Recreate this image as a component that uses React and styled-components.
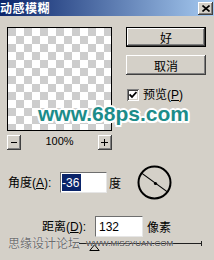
import React from "react";
import styled, { createGlobalStyle, css } from "styled-components";

const Global = createGlobalStyle`
  html, body { margin: 0; padding: 0; background: #d4d0c8; }
  body { font-family: "Liberation Sans", "Noto Sans CJK SC", sans-serif; }
`;

const bevel = css`
  box-shadow: inset -1px -1px #404040, inset 1px 1px #ffffff,
    inset -2px -2px #808080, inset 2px 2px #d4d0c8;
`;

const sunken = css`
  box-shadow: inset 1px 1px #808080, inset -1px -1px #ffffff,
    inset 2px 2px #404040, inset -2px -2px #d4d0c8;
`;

const Dialog = styled.div`
  position: relative;
  width: 214px;
  height: 260px;
  overflow: hidden;
  background: #d4d0c8;
  color: #000;
  font-size: 12px;
`;

const TitleBar = styled.div`
  display: flex;
  align-items: center;
  justify-content: space-between;
  height: 16px;
  background: linear-gradient(to right, #0a246a, #a6caf0);
`;

const Title = styled.span`
  color: #fff;
  font-family: "Noto Sans CJK SC", sans-serif;
  font-weight: 700;
  font-size: 12px;
  line-height: 16px;
  letter-spacing: 0.5px;
`;

const CloseBtn = styled.div`
  display: flex;
  align-items: center;
  justify-content: center;
  width: 15px;
  height: 13px;
  margin-right: 1px;
  background: #d4d0c8;
  ${bevel};
`;

const Body = styled.div`
  padding-top: 11px;
`;

const TopSection = styled.div`
  display: flex;
  align-items: flex-start;
  padding-left: 7px;
`;

const PreviewColumn = styled.div`
  width: 105px;
`;

const Preview = styled.div`
  box-sizing: border-box;
  width: 105px;
  height: 104px;
  border: 1px solid #000;
  background: repeating-conic-gradient(#ffffff 0 25%, #cdcdcd 0 50%) 0 0 / 16px 16px;
`;

const ZoomRow = styled.div`
  display: flex;
  align-items: center;
  justify-content: space-between;
  margin-top: 4px;
  height: 15px;
`;

const SmallBtn = styled.div`
  display: flex;
  align-items: center;
  justify-content: center;
  width: 14px;
  height: 15px;
  background: #d4d0c8;
  font-size: 11px;
  line-height: 1;
  ${bevel};
`;

const ZoomLabel = styled.span`
  font-size: 11px;
  line-height: 15px;
  margin-top: -3px;
`;

const ButtonColumn = styled.div`
  display: flex;
  flex-direction: column;
  width: 80px;
  margin-left: 14px;
`;

const Button = styled.div`
  box-sizing: border-box;
  display: flex;
  align-items: center;
  justify-content: center;
  width: 80px;
  height: 20px;
  margin-top: ${(p) => p.$gap || 0}px;
  background: #d4d0c8;
  font-family: "Noto Sans CJK SC", sans-serif;
  font-size: 12px;
  ${(p) =>
    p.$default
      ? css`
          border: 1px solid #000;
          ${bevel};
        `
      : bevel};
`;

const CheckRow = styled.div`
  display: flex;
  align-items: center;
  gap: 4px;
  margin-top: 13px;
  margin-left: 1px;
`;

const CheckBox = styled.div`
  display: flex;
  align-items: center;
  justify-content: center;
  width: 12px;
  height: 12px;
  background: #fff;
  ${sunken};
`;

const Label = styled.span`
  font-size: 12px;
  line-height: 14px;
  white-space: nowrap;
  width: ${(p) => (p.$w ? `${p.$w}px` : "auto")};
  flex: none;
`;

const FieldRow = styled.div`
  display: flex;
  align-items: center;
  margin-top: ${(p) => p.$top}px;
  padding-left: ${(p) => p.$left}px;
`;

const Field = styled.div`
  box-sizing: border-box;
  display: flex;
  align-items: stretch;
  width: ${(p) => p.$w}px;
  height: 21px;
  padding: 1px 1px 1px 1px;
  background: #fff;
  border-top: 1px solid #6e6e6e;
  border-left: 1px solid #6e6e6e;
  border-bottom: 1px solid #e6e6e6;
  border-right: 1px solid #e6e6e6;
  font-size: 12px;
  flex: none;
`;

const FieldText = styled.span`
  display: flex;
  align-items: center;
  padding: 0 ${(p) => (p.$selected ? 2 : 2)}px 0 ${(p) => (p.$selected ? 0 : 2)}px;
  background: ${(p) => (p.$selected ? "#0a246a" : "transparent")};
  color: ${(p) => (p.$selected ? "#fff" : "#000")};
`;

const Unit = styled.span`
  margin-left: ${(p) => p.$gap}px;
  font-size: 12px;
  white-space: nowrap;
`;

const Dial = styled.svg`
  display: block;
  margin-left: 16px;
  flex: none;
`;

const SliderRow = styled.div`
  position: relative;
  width: 123px;
  height: 10px;
  margin-top: 6px;
  margin-left: 79px;
`;

const Track = styled.div`
  width: 122px;
  height: 0;
  border-top: 1px solid #202020;
`;

const Tick = styled.div`
  position: absolute;
  right: 0;
  top: -2px;
  width: 1px;
  height: 5px;
  background: #202020;
`;

const Thumb = styled.svg`
  position: absolute;
  left: 10px;
  top: 1px;
`;

const SiteMark = styled.div`
  position: absolute;
  left: 38px;
  top: 103px;
  font-family: "Liberation Sans", "DejaVu Sans", sans-serif;
  font-weight: 700;
  font-size: 21px;
  line-height: 21px;
  color: #1c8c8a;
  white-space: nowrap;
  text-shadow: 2px 0 #fff, -2px 0 #fff, 0 2px #fff, 0 -2px #fff,
    1.5px 1.5px #fff, -1.5px 1.5px #fff, 1.5px -1.5px #fff, -1.5px -1.5px #fff,
    0 0 3px #fff;
`;

const ForumMark = styled.div`
  position: absolute;
  left: 8px;
  top: 236px;
  display: flex;
  align-items: center;
  gap: 6px;
  white-space: nowrap;
`;

const ForumName = styled.span`
  font-family: "Noto Sans CJK SC", sans-serif;
  font-size: 12px;
  line-height: 14px;
  color: #6e6e6e;
  text-shadow: 0 0 1px #fff;
`;

const ForumUrl = styled.span`
  font-family: "Liberation Sans", sans-serif;
  font-size: 8px;
  line-height: 8px;
  color: #3a3a3a;
  margin-top: 1px;
  text-shadow: 0 0 1px #fff;
`;

export default function App() {
  const angle = (36 * Math.PI) / 180;
  const c = 17.5;
  const r = 15.5;
  const dx = Math.cos(angle) * r;
  const dy = Math.sin(angle) * r;
  return (
    <>
      <Global />
      <Dialog>
        <TitleBar>
          <Title>动感模糊</Title>
          <CloseBtn>
            <svg width="8" height="7" viewBox="0 0 8 7">
              <path d="M0.5 0.5 L7.5 6.5 M7.5 0.5 L0.5 6.5" stroke="#000" strokeWidth="1.6" />
            </svg>
          </CloseBtn>
        </TitleBar>
        <Body>
          <TopSection>
            <PreviewColumn>
              <Preview />
              <ZoomRow>
                <SmallBtn>
                  <svg width="6" height="1" viewBox="0 0 6 1">
                    <rect width="6" height="1" fill="#000" />
                  </svg>
                </SmallBtn>
                <ZoomLabel>100%</ZoomLabel>
                <SmallBtn>
                  <svg width="7" height="7" viewBox="0 0 7 7">
                    <rect x="0" y="3" width="7" height="1" fill="#000" />
                    <rect x="3" y="0" width="1" height="7" fill="#000" />
                  </svg>
                </SmallBtn>
              </ZoomRow>
            </PreviewColumn>
            <ButtonColumn>
              <Button $default>好</Button>
              <Button $gap={8}>取消</Button>
              <CheckRow>
                <CheckBox>
                  <svg width="8" height="8" viewBox="0 0 8 8">
                    <path d="M0.5 3.5 L3 6 L7.5 1" stroke="#000" strokeWidth="1.8" fill="none" />
                  </svg>
                </CheckBox>
                <Label>
                  预览(<u>P</u>)
                </Label>
              </CheckRow>
            </ButtonColumn>
          </TopSection>

          <FieldRow $top={15} $left={8}>
            <Label $w={52}>
              角度(<u>A</u>):
            </Label>
            <Field $w={47}>
              <FieldText $selected>-36</FieldText>
            </Field>
            <Unit $gap={2}>度</Unit>
            <Dial width="35" height="35" viewBox="0 0 35 35">
              <circle cx={c} cy={c} r="16" fill="none" stroke="#000" strokeWidth="2" />
              <line
                x1={c - dx}
                y1={c - dy}
                x2={c + dx}
                y2={c + dy}
                stroke="#000"
                strokeWidth="1.2"
              />
              <circle cx={c + 1} cy={c + 1} r="1.6" fill="#000" />
            </Dial>
          </FieldRow>

          <FieldRow $top={16} $left={42}>
            <Label $w={53}>
              距离(<u>D</u>):
            </Label>
            <Field $w={48}>
              <FieldText>132</FieldText>
            </Field>
            <Unit $gap={4}>像素</Unit>
          </FieldRow>

          <SliderRow>
            <Track />
            <Tick />
            <Thumb width="11" height="7" viewBox="0 0 11 7">
              <path d="M5.5 0.8 L10.2 6.5 L0.8 6.5 Z" fill="#d4d0c8" stroke="#000" strokeWidth="1" />
            </Thumb>
          </SliderRow>
        </Body>

        <SiteMark>www.68ps.com</SiteMark>
        <ForumMark>
          <ForumName>思缘设计论坛</ForumName>
          <ForumUrl>WWW.MISSYUAN.COM</ForumUrl>
        </ForumMark>
      </Dialog>
    </>
  );
}
